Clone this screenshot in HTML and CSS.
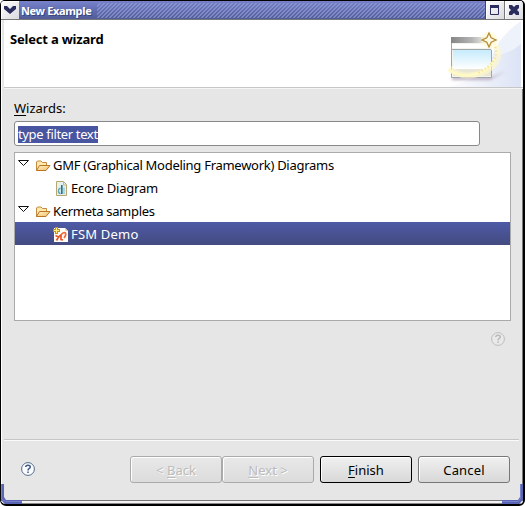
FILE: index.html
```html
<!DOCTYPE html>
<html lang="en">
<head>
<meta charset="utf-8">
<title>New Example</title>
<link rel="stylesheet" href="styles.css">
</head>
<body>
<svg class="defs" width="0" height="0" aria-hidden="true">
  <defs>
    <linearGradient id="paper" x1="0" y1="0" x2="1" y2="1"><stop stop-color="#fff4d0"/><stop offset="1" stop-color="#f0bd62"/></linearGradient>
    <symbol id="folder" viewBox="0 0 16 14">
      <path d="M1.5 11.5V3L2.5 2H6L7.5 3.5H11.5V6.5" fill="#ffe9b0" stroke="#c58a3b"/>
      <path d="M1.5 11.5L4.5 6.5H15L11 11.5Z" fill="url(#paper)" stroke="#b87624"/>
    </symbol>
  </defs>
</svg>
<div class="window">
  <header class="titlebar">
    <span class="tb-button menu"><svg width="18" height="18"><path d="M3 5H6L9 8L12 5H15V8L9 13L3 8Z" fill="#292c5c"/></svg></span>
    <span class="caption"><span class="t-caption">New Example</span></span>
    <span class="grip"></span>
    <span class="tb-button max"><svg width="18" height="18"><path d="M4.5 4.5H12.5V13.5H4.5Z" fill="none" stroke="#292c5c"/><path d="M4 4H13V7H4Z" fill="#292c5c"/></svg></span>
    <span class="tb-button close"><svg width="18" height="18"><path d="M4 4H7L9 6L11 4H14V7L12 9L14 11V14H11L9 12L7 14H4V11L6 9L4 7V4Z" fill="#292c5c"/></svg></span>
  </header>
  <section class="banner">
    <h1><span class="t-head">Select a wizard</span></h1>
    <svg class="art" width="78" height="67" viewBox="443 20 78 67">
      <defs>
        <linearGradient id="wash" x1="0" x2="1"><stop stop-color="#fff"/><stop offset="1" stop-color="#dce3f5"/></linearGradient>
        <linearGradient id="bar" x1="0" x2="1"><stop stop-color="#858585"/><stop offset=".55" stop-color="#b5b5b5"/><stop offset="1" stop-color="#f8f8ef"/></linearGradient>
        <linearGradient id="sky" x1="0" y1="0" x2="0" y2="1"><stop stop-color="#c3e9fc"/><stop offset="1" stop-color="#fff"/></linearGradient>
        <filter id="soft" x="-20%" y="-50%" width="140%" height="200%"><feGaussianBlur stdDeviation="1.5"/></filter>
      </defs>
      <path d="M443 87Q480 83 494 54Q501 35 521 22V87Z" fill="url(#wash)"/>
      <path d="M492 56Q510 54 521 44V21Q499 36 492 56Z" fill="#eef2fb"/>
      <path d="M452 77H492L506 71L490 80H452Z" fill="#b9adc2" filter="url(#soft)"/>
      <path d="M451 37H492V77H451Z" fill="#f4f4ef"/>
      <path d="M451 37H489V43H451Z" fill="url(#bar)"/>
      <path d="M452 44H490V48H452Z" fill="#fff"/>
      <path d="M453 49H491V69H453Z" fill="url(#sky)"/>
      <path d="M451.5 43V77.5H491.5V50M452 49.5H491" fill="none" stroke="#a0a6a6"/>
      <path d="M453 69H491V76H453Z" fill="#e9e6d6"/>
      <path d="M496 45Q504 63 482 73Q461 80 449 68" fill="none" stroke="#fff9c8" stroke-width="6" opacity=".6"/>
      <path d="M449 70Q457 76 470 75Q489 73 495 58" fill="none" stroke="#fff9c4" stroke-width="2.5"/>
      <path d="M495 47Q500 62 478 73" fill="none" stroke="#f6e2a0" stroke-width="2.5" stroke-dasharray="1.2 2.4"/>
      <circle cx="489" cy="40" r="8" fill="#fff8c8" opacity=".6"/>
      <path d="M489 33L491.2 37.8L496 40L491.2 42.2L489 47L486.8 42.2L482 40L486.8 37.8Z" fill="#fffbe5" stroke="#b48b39" stroke-width="1.3"/>
    </svg>
  </section>
  <main class="page">
    <label class="label" for="filter"><span class="t-label"><u>W</u>izards:</span></label>
    <div class="filter" id="filter"><span class="selection"><span class="t-filter">type filter text</span></span></div>
    <div class="tree">
      <div class="row"><svg class="arrow" width="12" height="8"><path d="M.5 1.5H10.5L5.5 6.5Z" fill="#fff" stroke="#111"/></svg><svg class="folder" width="16" height="14"><use href="#folder"/></svg><span class="t-gmf">GMF (Graphical Modeling Framework) Diagrams</span></div>
      <div class="row child"><svg class="file" width="16" height="16"><path d="M3.5 .5H10.5L13.5 3.5V14.5H3.5Z" fill="#e4f1ee" stroke="#b7a672"/><path d="M10.5 1V4H13" fill="none" stroke="#c8b981"/><path d="M7.5 7.5H6.5Q5.5 8 5.5 10Q5.5 12.5 7.5 12.5" fill="none" stroke="#5ba6ba" stroke-width="1.4"/><path d="M8.8 4V13" stroke="#26738d" stroke-width="1.7"/><path d="M11 6.5V13" stroke="#7db9c8"/></svg><span class="t-ecore">Ecore Diagram</span></div>
      <div class="row"><svg class="arrow" width="12" height="8"><path d="M.5 1.5H10.5L5.5 6.5Z" fill="#fff" stroke="#111"/></svg><svg class="folder" width="16" height="14"><use href="#folder"/></svg><span class="t-kermeta">Kermeta samples</span></div>
      <div class="row child selected"><svg class="file" width="16" height="16"><path d="M1 1H12L15 4V15H1Z" fill="#fffdf8"/><path d="M12 1V4H15" fill="#eed7bd"/><path d="M2.5 8.5L5.5 10L3.5 13.5M5.5 10L8 8V12.5L10 13" fill="none" stroke="#e95528" stroke-width="1.7"/><path d="M8 8.5Q10 4.5 12.5 6Q13.5 8 11 11" fill="none" stroke="#f06a38" stroke-width="1.6"/><path d="M3.5 0V7M0 3.5H7" stroke="#c39320" stroke-width="3"/><path d="M3.5 1V6M1 3.5H6" stroke="#fff38a"/></svg><span class="t-fsm">FSM Demo</span></div>
    </div>
    <div class="help-row"><svg class="help-muted" width="16" height="16"><circle cx="8" cy="8" r="6.4" fill="#e9e9e9" stroke="#bdbdbd"/><path d="M5.7 6Q5.8 4.2 8 4.2Q10.3 4.2 10.3 6Q10.3 7 9 7.7Q8 8.3 8 9.4M8 10.5V12" fill="none" stroke="#b9b9b9" stroke-width="1.5"/></svg></div>
  </main>
  <footer class="actions">
    <svg class="help" width="16" height="16"><circle cx="8" cy="8" r="6.4" fill="#fafcff" stroke="#526b8b"/><path d="M5.7 6Q5.8 4.2 8 4.2Q10.3 4.2 10.3 6Q10.3 7 9 7.7Q8 8.3 8 9.4M8 10.5V12" fill="none" stroke="#3e5783" stroke-width="1.5"/></svg>
    <button class="disabled" disabled><span class="t-back">&lt; <u>B</u>ack</span></button>
    <button class="disabled" disabled><span class="t-next"><u>N</u>ext &gt;</span></button>
    <button class="finish"><span class="t-finish"><u>F</u>inish</span></button>
    <button class="cancel"><span class="t-cancel">Cancel</span></button>
  </footer>
  <div class="bottom-edge"></div>
  <svg class="corner left" width="21" height="20"><path d="M0 0H3V13L5 16H21V20H4L0 16Z" fill="#5965b4"/><path d="M.5 0V15L4.5 17.5H21" fill="none" stroke="#7882ca"/></svg>
  <svg class="corner right" width="21" height="20"><path d="M18 0H21V16L17 20H0V16H16L18 13Z" fill="#5965b4"/><path d="M18.5 0V14L16.5 17.5H0" fill="none" stroke="#7882ca"/></svg>
</div>
</body>
</html>
```

FILE: styles.css
```css
* { box-sizing: border-box; }
body { margin: 0; background: #fff; font: 13px/23px "Noto Sans", "Open Sans", sans-serif; color: #000; overflow: hidden; }
.defs { position: absolute; }
svg { display: block; flex: none; }
span { white-space: nowrap; }
u { text-decoration-thickness: 1px; text-underline-offset: 2px; }
.window { position: relative; width: 525px; height: 506px; display: flex; flex-direction: column; background: #e6e6e6; border: solid #000; border-width: 1px 2px 2px 1px; border-radius: 5px 5px 6px 6px; box-shadow: inset 1px 0 #fff, inset -1px 0 #777; overflow: hidden; }
.titlebar { height: 19px; flex: none; display: flex; background: linear-gradient(#7782ca, #6470b5 45%, #505b99); border-bottom: 1px solid #777; }
.tb-button { height: 18px; width: 18px; background: linear-gradient(135deg, #fff, #d9d9df); box-shadow: inset 1px 1px #fff; }
.max { width: 19px; border-left: 1px solid #3c457d; }
.close { width: 19px; border-left: 1px solid #777; }
.caption { width: 78px; padding-left: 2px; font-size: 11px; line-height: 20px; font-weight: 700; color: #fff; text-shadow: 1px 1px #3a4379; }
.grip { flex: 1; margin: 2px 0 1px; background: repeating-linear-gradient(135deg, transparent 0 1.9px, #98a2d899 1.9px 2.83px); }
.banner { height: 68px; flex: none; display: flex; justify-content: space-between; margin-left: 3px; background: #fff; border-bottom: 1px solid #c6c6c6; box-shadow: 0 1px #f4f4f4; }
.banner h1 { margin: 8px 0 0 6px; font-size: 13px; line-height: 23px; }
.art { margin-right: 2px; }
.page { height: 352px; flex: none; margin: 0 4px 0 3px; padding: 9px 7px 0 10px; border-bottom: 1px solid #c5c5c5; box-shadow: 0 1px #fafafa; }
.label { display: block; height: 24px; }
.filter { width: 466px; height: 25px; background: #fff; border: 1px solid #888; border-radius: 3px; padding: 4px 0 0 3px; }
.selection { display: block; width: 80px; height: 17px; background: #4855a0; color: #fff; line-height: 17px; }
.tree { width: 497px; height: 169px; margin-top: 6px; background: #fff; border: 1px solid #aaa; }
.row { height: 23px; display: flex; align-items: center; padding: 2px 0 0 3px; }
.arrow { margin: -5px 5px 0 0; }
.folder { margin-right: 2px; }
.child { padding-left: 38px; }
.file { margin-right: 2px; }
.selected { background: linear-gradient(#4e5aa6, #434b80); color: #fff; }
.help-row { height: 34px; padding: 10px 6px 0 0; }
.help-muted { margin-left: auto; }
.actions { height: 60px; flex: none; display: flex; align-items: flex-start; padding: 16px 12px 0 19px; }
.help { margin: 5px 94px 0 0; }
button { width: 92px; height: 27px; padding: 0; font: inherit; line-height: 24px; color: #000; border: 1px solid #777; border-radius: 3px; background: linear-gradient(#f0f0f0, #d8d8d8); box-shadow: inset 1px 1px #fff; }
.disabled { color: #bcbcbc; border-color: #aaa; background: linear-gradient(#e8e8e8, #dcdcdc); text-shadow: 1px 1px #fff; }
.finish { border-color: #000; margin: 0 6px; }
.bottom-edge { height: 4px; flex: none; border-top: 1px solid #777; border-bottom: 1px solid #888; background: #f5f2f3; }
.corner { position: absolute; bottom: 0; }
.left { left: 0; }
.right { right: 0; }
.t-caption { letter-spacing: -.35px; }
.t-head { letter-spacing: -.2px; }
.t-filter { letter-spacing: -.35px; }
.t-gmf { letter-spacing: -.28px; }
.t-ecore { letter-spacing: -.22px; }
.t-kermeta { letter-spacing: -.3px; }
.t-fsm { letter-spacing: .2px; }
.t-cancel { letter-spacing: .15px; }
```
